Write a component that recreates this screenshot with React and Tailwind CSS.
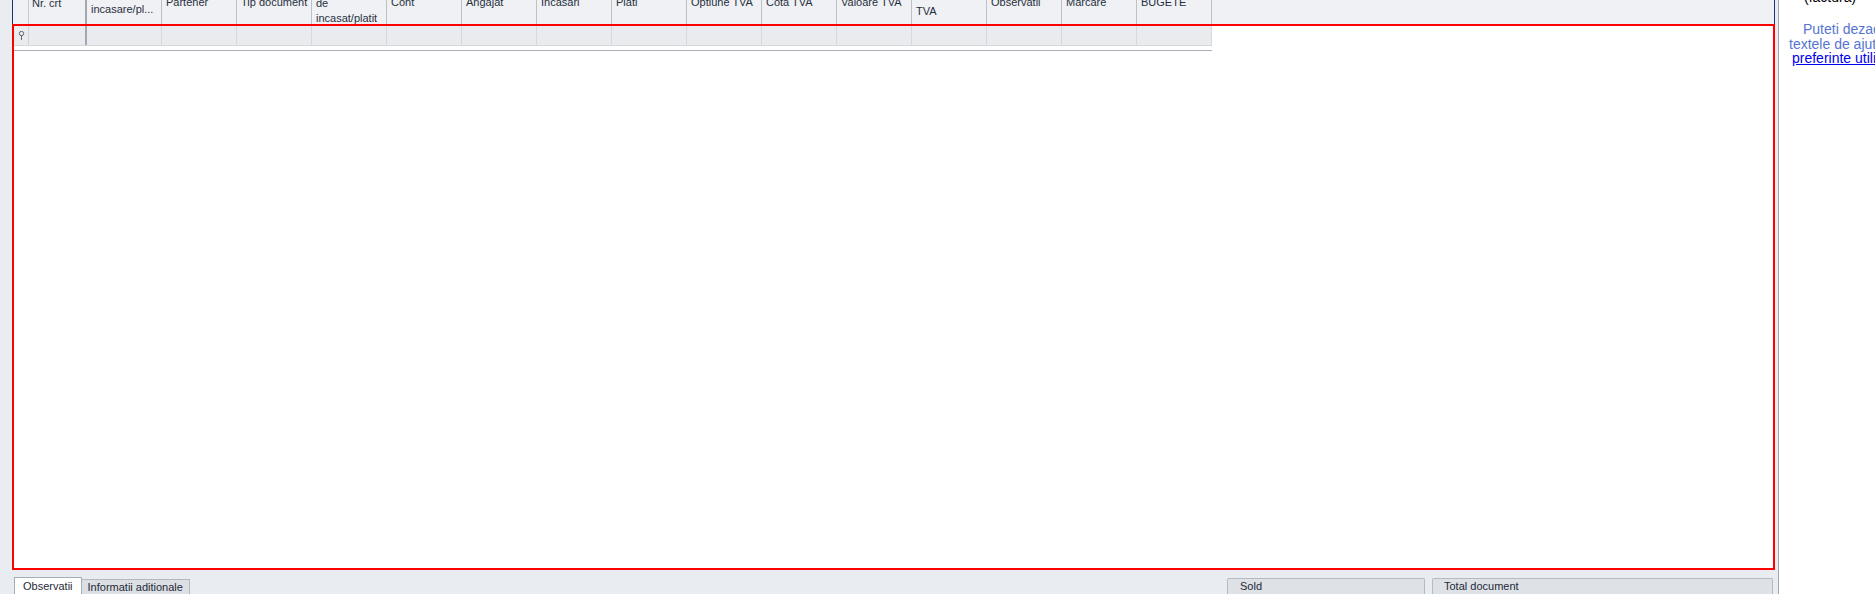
const columns = [
  { label: 'incasare/pl...', top: 'mt-[3px]' },
  { label: 'Partener', top: 'mt-[-4px]' },
  { label: 'Tip document', top: 'mt-[-4px]' },
  { label: ['de', 'incasat/platit'], top: 'mt-[-4px]' },
  { label: 'Cont', top: 'mt-[-4px]' },
  { label: 'Angajat', top: 'mt-[-4px]' },
  { label: 'Incasari', top: 'mt-[-4px]' },
  { label: 'Plati', top: 'mt-[-4px]' },
  { label: 'Optiune TVA', top: 'mt-[-4px]' },
  { label: 'Cota TVA', top: 'mt-[-4px]' },
  { label: 'Valoare TVA', top: 'mt-[-4px]' },
  { label: 'TVA', top: 'mt-[5px]' },
  { label: 'Observatii', top: 'mt-[-4px]' },
  { label: 'Marcare', top: 'mt-[-4px]' },
  { label: 'BUGETE', top: 'mt-[-4px]' },
];

function PinIcon() {
  return (
    <svg width="7" height="9" viewBox="0 0 7 9">
      <circle cx="3.5" cy="2.5" r="2.2" fill="none" stroke="#5d6470" strokeWidth="1" />
      <rect x="3" y="4.5" width="1" height="4.5" fill="#5d6470" />
    </svg>
  );
}

function HeaderCell({ col }) {
  return (
    <div className="w-[75px] h-full border-r border-[#bcc0c7] px-1 overflow-hidden shrink-0">
      {Array.isArray(col.label) ? (
        <div className={col.top}>
          <div className="leading-[15px] whitespace-nowrap">{col.label[0]}</div>
          <div className="leading-[15px] whitespace-nowrap">{col.label[1]}</div>
        </div>
      ) : (
        <div className={`${col.top} leading-[13px] whitespace-nowrap`}>{col.label}</div>
      )}
    </div>
  );
}

export default function App() {
  return (
    <div className="flex w-[1875px] h-[594px] overflow-hidden bg-white font-['Liberation_Sans',Arial,sans-serif]">
      {/* main panel */}
      <div className="w-[1779px] h-full shrink-0 flex flex-col bg-[#e9ecf0] border-r border-[#a3a9b1]">
        <div className="ml-[12px] w-[1763px] flex flex-col">
          {/* grid header, scrolled */}
          <div className="h-[24px] flex bg-[#eff1f5] border-l border-r border-[#1f3278] text-[11px] text-[#27303d] overflow-hidden">
            <div className="w-[16px] h-full border-r border-[#c9cdd3] shrink-0" />
            <div className="w-[58px] h-full border-r-2 border-[#a3a8b0] px-[3px] shrink-0 overflow-hidden">
              <div className="mt-[-3px] leading-[13px] whitespace-nowrap">Nr. crt</div>
            </div>
            {columns.map((col, i) => (
              <HeaderCell key={i} col={col} />
            ))}
          </div>

          {/* grid body */}
          <div className="h-[546px] border-2 border-[#ff0000] bg-white">
            <div className="w-[1198px] h-[20px] flex bg-[#e9ebee] border-b border-[#d5d8dd]">
              <div className="w-[15px] h-full border-r border-[#cfd3d8] flex items-center justify-center shrink-0">
                <PinIcon />
              </div>
              <div className="w-[58px] h-full border-r-2 border-[#a3a8b0] shrink-0" />
              {columns.map((col, i) => (
                <div key={i} className="w-[75px] h-full border-r border-[#d5d8dd] shrink-0" />
              ))}
            </div>
            <div className="mt-[4px] w-[1198px] h-px bg-[#a8afb8]" />
          </div>
        </div>

        {/* bottom bar */}
        <div className="flex-1 flex items-end text-[11px] text-[#1f2a37]">
          <div className="ml-[14px] flex items-end">
            <div className="h-[17px] px-[8px] bg-white border border-b-0 border-[#a7adb5] leading-[17px]">
              Observatii
            </div>
            <div className="h-[15px] px-[6px] bg-[#dcdfe4] border border-l-0 border-b-0 border-[#b4b9c0] leading-[15px]">
              Informatii aditionale
            </div>
          </div>
          <div className="ml-auto mr-[5px] flex gap-[7px]">
            <div className="w-[198px] h-[16px] pl-[12px] bg-[#dee1e6] border border-b-0 border-[#b6bbc2] rounded-t-[2px] leading-[15px]">
              Sold
            </div>
            <div className="w-[341px] h-[16px] pl-[11px] bg-[#dee1e6] border border-b-0 border-[#b6bbc2] rounded-t-[2px] leading-[15px]">
              Total document
            </div>
          </div>
        </div>
      </div>

      {/* help panel */}
      <div className="flex-1 overflow-hidden text-[14px] leading-[14.5px] whitespace-nowrap">
        <div className="mt-[-10px] ml-[25px] text-black">(factura)</div>
        <div className="mt-[17.5px] ml-[24px] text-[#5675d2]">Puteti dezactiva afisarea</div>
        <div className="ml-[10px] text-[#5675d2]">textele de ajutor din</div>
        <div className="ml-[13px] text-[#0000ee] underline">preferinte utilizator</div>
      </div>
    </div>
  );
}
